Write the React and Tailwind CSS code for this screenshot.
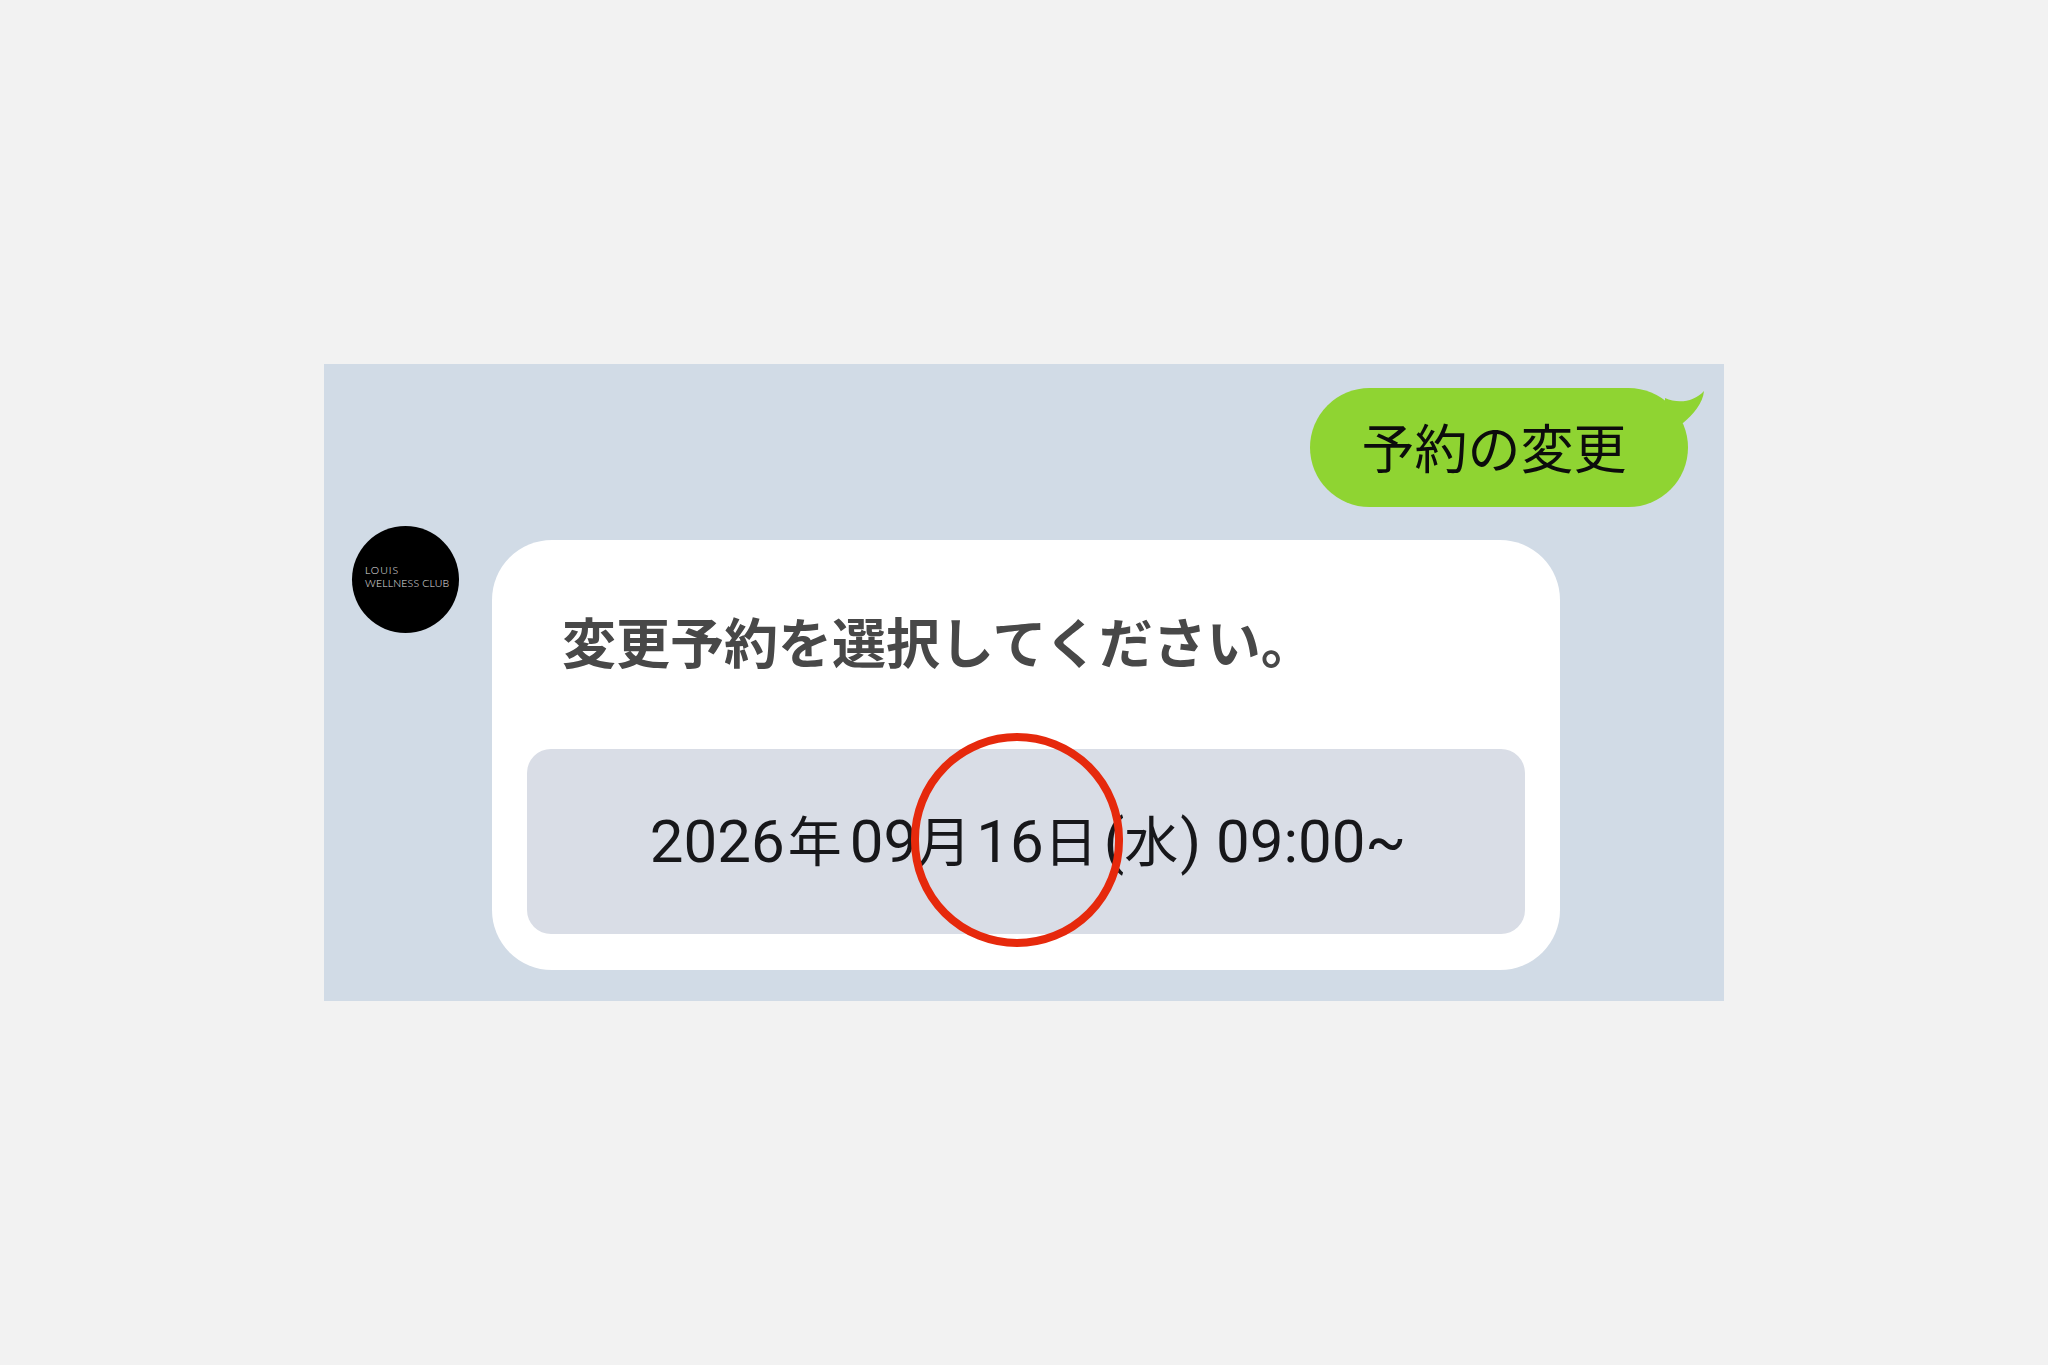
const CJK = "font-['Roboto','Noto_Sans_CJK_JP',sans-serif]"

function SentBubble() {
  return (
    <div className="relative flex h-[119px] w-[378px] items-center justify-center rounded-[60px] bg-[#8fd432] pr-[10px] pt-[8px]">
      <svg className="absolute left-[350px] top-[0px]" width="50" height="40" viewBox="0 0 50 40" fill="none">
        <path d="M5 10 C18 16 34 14 44 3 C43 15 33 27 23 35 L5 35 Z" fill="#8fd432" />
      </svg>
      <span className={`${CJK} text-[53px] leading-none text-[#0c0c0c]`}>予約の変更</span>
    </div>
  )
}

function Avatar() {
  return (
    <div className="flex h-[107px] w-[107px] shrink-0 flex-col justify-center rounded-full bg-black pb-[5px] pl-[13px] font-['Lato',sans-serif] text-[10.5px] font-light leading-[13px] text-[#e4e4e4]">
      <span className="tracking-[1px]">LOUIS</span>
      <span className="whitespace-nowrap tracking-[0.2px]">WELLNESS CLUB</span>
    </div>
  )
}

export default function App() {
  return (
    <div className="flex min-h-screen items-center justify-center bg-[#f2f2f2]">
      <div className="h-[637px] w-[1400px] bg-[#d1dbe6] pl-[28px] pr-[36px] pt-[24px]">
        <div className="flex justify-end">
          <SentBubble />
        </div>

        <div className="mt-[33px] flex items-start gap-[33px]">
          <div className="-mt-[14px]">
            <Avatar />
          </div>

          <div className="h-[430px] w-[1068px] rounded-[60px] bg-white px-[35px] pt-[79px]">
            <p className={`${CJK} pl-[35px] text-[54px] font-bold leading-[53px] text-[#484848]`}>
              変更予約を選択してください。
            </p>

            <div className="relative mt-[77px] flex h-[185px] items-center justify-center rounded-[24px] bg-[#d9dde6] pl-[4px]">
              <span className={`${CJK} whitespace-pre text-[60px] leading-none text-[#17171a]`}>
                2026
                <span className="ml-[3px] mr-[8px] text-[54px]">年</span>
                09
                <span className="mr-[5px] text-[54px]">月</span>
                16
                <span className="text-[54px]">日</span>
                <span className="ml-[6px]">(</span>
                <span className="mr-[2px] text-[54px]">水</span>
                {') 09:00~'}
              </span>
              {/* red marker circle */}
              <div className="absolute left-[384px] top-[-16px] h-[214px] w-[212px] rounded-full border-[8px] border-[#e6290c]" />
            </div>
          </div>
        </div>
      </div>
    </div>
  )
}
